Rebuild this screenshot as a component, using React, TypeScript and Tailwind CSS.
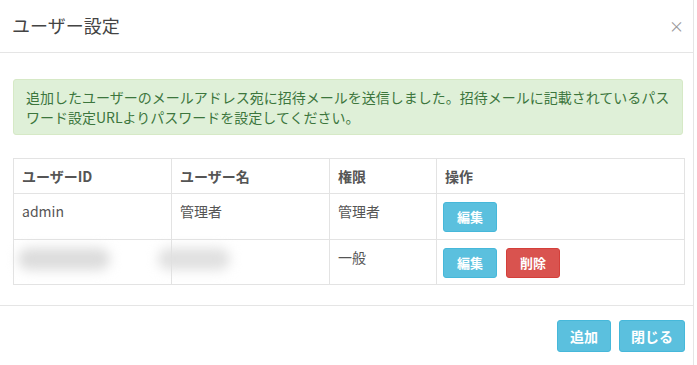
import React from "react";

interface UserRow {
  id: string;
  name: string;
  role: string;
  canDelete: boolean;
}

const rows: UserRow[] = [
  { id: "admin", name: "管理者", role: "管理者", canDelete: false },
  { id: "", name: "", role: "一般", canDelete: true },
];

const font = {
  fontFamily: '"Noto Sans CJK JP", "Noto Sans", sans-serif',
};

const App: React.FC = () => {
  return (
    <div className="w-[697px] h-[365px] bg-white overflow-hidden" style={font}>
      <div className="w-[694px] h-full border-r border-[#e5e5e5] text-[#333]">
        {/* Header */}
        <div className="h-[53px] border-b border-[#e5e5e5] pl-[12px] pr-[9px] flex items-center justify-between">
          <h4 className="text-[18px] leading-[22px] font-normal text-[#444] -mt-[2px]">
            ユーザー設定
          </h4>
          <button className="text-[15px] leading-none text-[#999] -mt-[1px]">×</button>
        </div>

        {/* Body */}
        <div className="pl-[13px] pr-[10px] pt-[26px] pb-[20px]">
          <div className="h-[56px] rounded-[3px] border border-[#d6e9c6] bg-[#dff0d8] px-[12px] py-[7px] text-[14px] leading-[20px] text-[#3c763d]">
            追加したユーザーのメールアドレス宛に招待メールを送信しました。招待メールに記載されているパスワード設定URLよりパスワードを設定してください。
          </div>

          <table className="mt-[23px] w-[671px] border-collapse table-fixed text-[14px] leading-[20px] text-[#555]">
            <colgroup>
              <col className="w-[158px]" />
              <col className="w-[158px]" />
              <col className="w-[107px]" />
              <col className="w-[248px]" />
            </colgroup>
            <thead>
              <tr className="h-[35px]">
                {["ユーザーID", "ユーザー名", "権限", "操作"].map((h) => (
                  <th
                    key={h}
                    className="border border-[#e3e3e3] px-[8px] text-left font-bold align-middle text-[#555]"
                  >
                    {h}
                  </th>
                ))}
              </tr>
            </thead>
            <tbody>
              {rows.map((row, i) => (
                <tr key={i} className={i === 0 ? "h-[46px]" : "h-[45px]"}>
                  <td className="relative border border-[#e3e3e3] px-[8px] pt-[7px] align-top">
                    {row.id ? (
                      row.id
                    ) : (
                      <div className="absolute left-[4px] top-[8px] h-[22px] w-[92px] rounded-full bg-[#dcdcdc] blur-[6px]" />
                    )}
                  </td>
                  <td className="relative border border-[#e3e3e3] px-[8px] pt-[7px] align-top">
                    {row.name ? (
                      row.name
                    ) : (
                      <div className="absolute -left-[14px] top-[8px] h-[22px] w-[72px] rounded-full bg-[#e0e0e0] blur-[6px]" />
                    )}
                  </td>
                  <td className="border border-[#e3e3e3] px-[8px] pt-[7px] align-top">
                    {row.role}
                  </td>
                  <td className="border border-[#e3e3e3] px-[6px] pt-[8px] pb-[6px] align-top">
                    <div className="flex gap-[9px]">
                      <button className="w-[54px] h-[30px] rounded-[3px] bg-[#5bc0de] border border-[#46b8da] text-white text-[13px] font-bold">
                        編集
                      </button>
                      {row.canDelete && (
                        <button className="w-[54px] h-[30px] rounded-[3px] bg-[#d9534f] border border-[#d43f3a] text-white text-[13px] font-bold">
                          削除
                        </button>
                      )}
                    </div>
                  </td>
                </tr>
              ))}
            </tbody>
          </table>
        </div>

        {/* Footer */}
        <div className="border-t border-[#e5e5e5] pt-[14px] pr-[8px] flex justify-end gap-[8px]">
          <button className="w-[54px] h-[32px] rounded-[3px] bg-[#5bc0de] border border-[#46b8da] text-white text-[14px] font-bold">
            追加
          </button>
          <button className="w-[66px] h-[32px] rounded-[3px] bg-[#5bc0de] border border-[#46b8da] text-white text-[14px] font-bold">
            閉じる
          </button>
        </div>
      </div>
    </div>
  );
};

export default App;
